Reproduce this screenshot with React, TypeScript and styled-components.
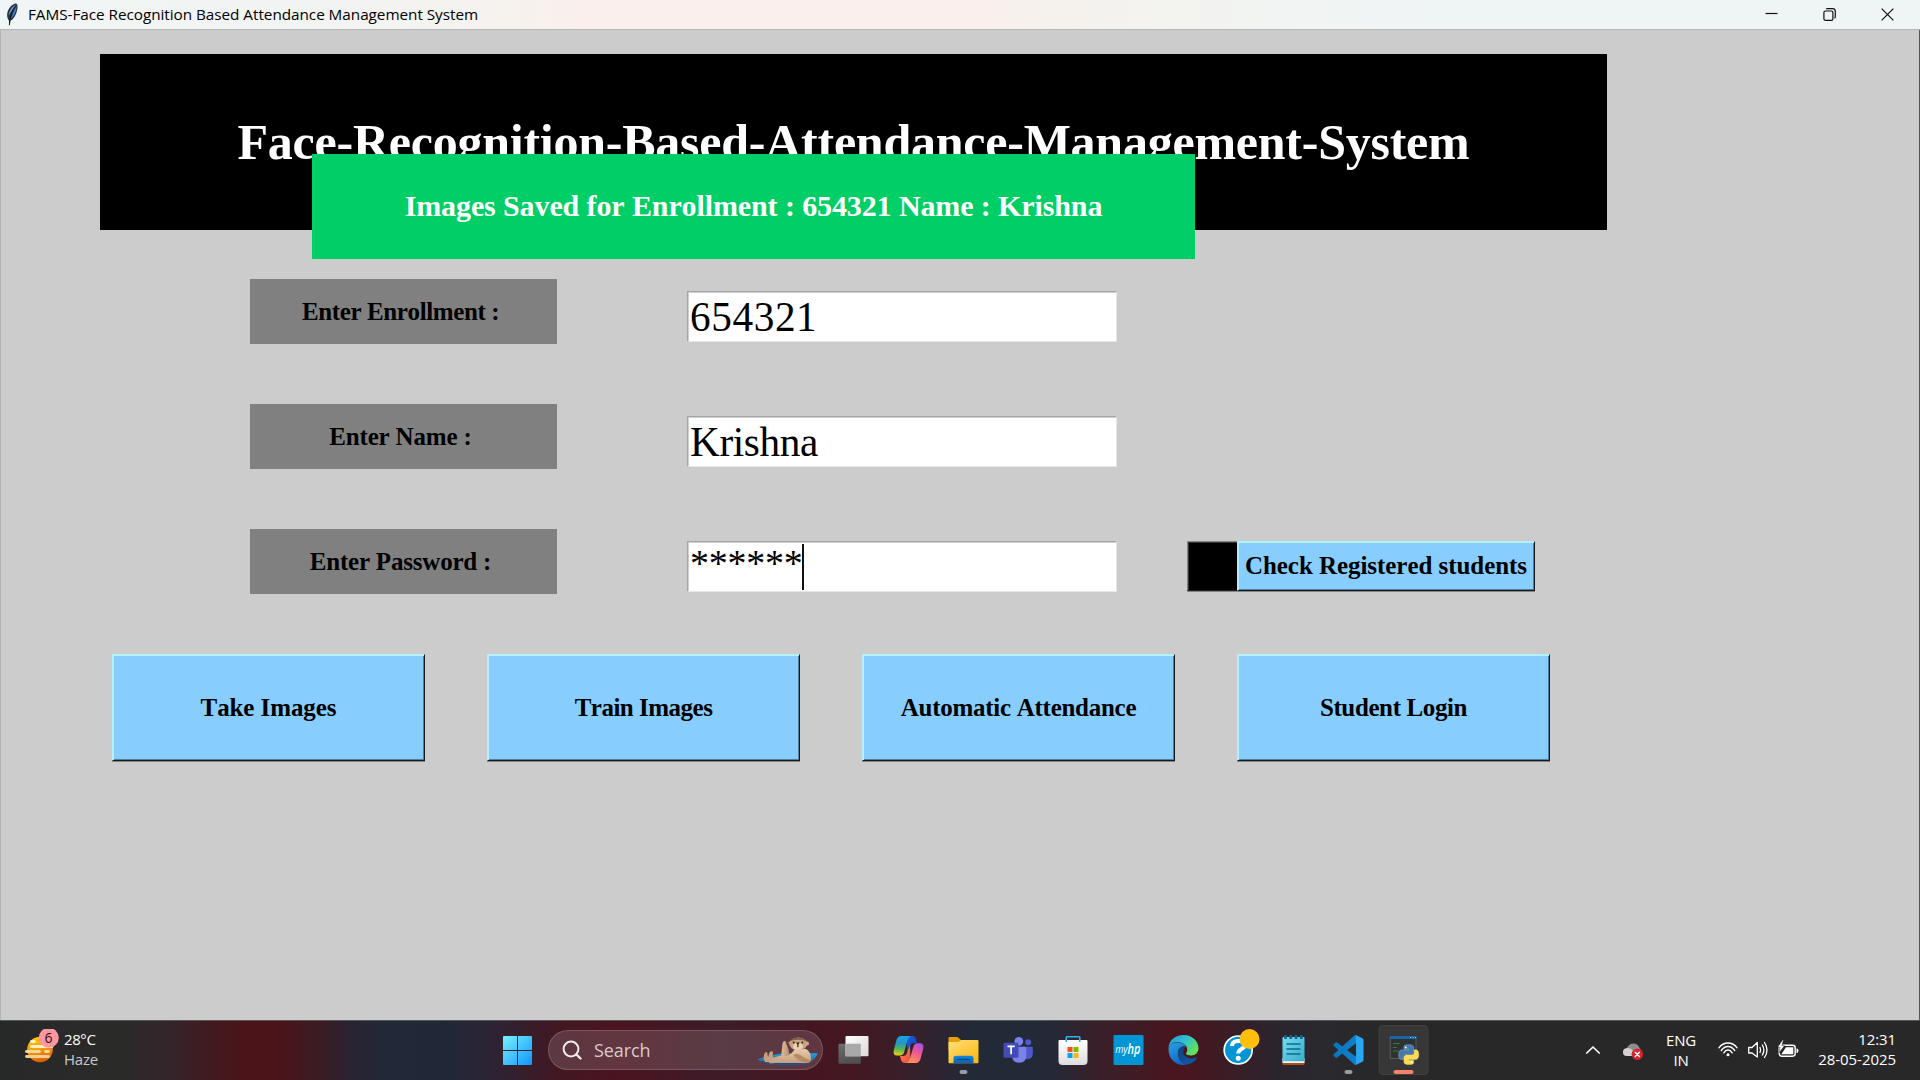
import React from "react";
import styled, { createGlobalStyle } from "styled-components";

const UI_FONT = '"Open Sans", "Noto Sans", sans-serif';
const SERIF = '"Liberation Serif", "Times New Roman", serif';

const GlobalStyle = createGlobalStyle`
  *, *::before, *::after { box-sizing: border-box; }
  html, body { margin: 0; padding: 0; overflow: hidden; }
  body { background: #cccccc; }
`;

const Desktop = styled.div`
  width: 1920px;
  height: 1080px;
  display: flex;
  flex-direction: column;
  overflow: hidden;
  font-family: ${UI_FONT};
`;

/* ---------- window chrome ---------- */

const TitleBar = styled.header`
  flex: none;
  height: 30px;
  display: flex;
  align-items: center;
  justify-content: space-between;
  padding-right: 3px;
  background: linear-gradient(90deg, #f0f5f5 0, #f2f4f3 330px, #f6f2ee 500px, #faefed 600px, #faefed 980px, #f6f1ed 1040px, #f3f3ef 1160px, #f1f4f3 1300px, #eff4f5 1440px);
  border-bottom: 1px solid #b2b6b5;
`;

const TitleLeft = styled.div`
  display: flex;
  align-items: center;
  padding-left: 5px;
  gap: 9px;
`;

const TitleText = styled.span`
  margin-top: -2px;
  font-size: 15.3px;
  line-height: 20px;
  letter-spacing: -0.04px;
  color: #000;
  white-space: nowrap;
`;

const WindowButtons = styled.div`
  display: flex;
`;

const WindowButton = styled.button`
  width: 58.3px;
  height: 29px;
  padding: 0;
  border: 0;
  background: none;
  display: flex;
  align-items: center;
  justify-content: center;
`;

/* ---------- application area ---------- */

const Client = styled.main`
  position: relative;
  flex: 1;
  background: #cccccc;
  border-left: 1px solid #b4b4b4;
  border-right: 1px solid #555;
  padding: 24px 0 0 99px;
`;

const Banner = styled.h1`
  margin: 0;
  width: 1507px;
  height: 176px;
  display: flex;
  align-items: center;
  justify-content: center;
  background: #000;
  color: #fff;
  font: bold 50px ${SERIF};
  letter-spacing: -0.24px;
  font-kerning: none;
  white-space: nowrap;
`;

const Notification = styled.div`
  position: absolute;
  left: 311px;
  top: 124px;
  width: 883px;
  height: 105px;
  display: flex;
  align-items: center;
  justify-content: center;
  padding-bottom: 1px;
  background: #00ce66;
  color: #fff;
  font: bold 30px ${SERIF};
  letter-spacing: -0.11px;
  font-kerning: none;
  white-space: nowrap;
`;

const Form = styled.section`
  display: flex;
  flex-direction: column;
  gap: 60px;
  margin: 49px 0 0 150px;
`;

const FormRow = styled.div`
  display: flex;
  align-items: flex-start;
  height: 65px;
`;

const FieldLabel = styled.label<{ $track: number }>`
  width: 307px;
  height: 65px;
  display: flex;
  align-items: center;
  justify-content: center;
  background: #808080;
  color: #000;
  font: bold 25px ${SERIF};
  letter-spacing: ${(p) => p.$track}px;
  font-kerning: none;
  white-space: pre;
`;

const Entry = styled.div<{ $track?: number }>`
  margin: 12px 0 0 130px;
  width: 430px;
  height: 51px;
  display: flex;
  align-items: center;
  padding-left: 2px;
  background: #fff;
  border: 1px solid;
  border-color: #a6a6a6 #e6e6e6 #e6e6e6 #a6a6a6;
  box-shadow: inset 1px 1px 0 #cfcfcf;
  color: #000;
  font: 41.25px ${SERIF};
  letter-spacing: ${(p) => p.$track ?? 0}px;
  font-kerning: none;
`;

const Mask = styled.span`
  padding-bottom: 7px;
  font-size: 38px;
  letter-spacing: -0.25px;
`;

const Caret = styled.i`
  width: 2.5px;
  height: 46px;
  margin-left: -1px;
  background: #111;
`;

const CheckGroup = styled.div`
  display: flex;
  margin: 12px 0 0 70px;
`;

const Bevel = styled.button<{ $track?: number }>`
  padding: 0;
  display: flex;
  align-items: center;
  justify-content: center;
  background: #87ceff;
  border: 1px solid;
  border-color: #b4eff6 #16191c #16191c #b4eff6;
  box-shadow: inset 1px 1px 0 #b4f0ff, inset -1px -1px 0 #4f7d9e, 0 1px 0 #858585;
  color: #000;
  font: bold 25px ${SERIF};
  letter-spacing: ${(p) => p.$track ?? 0}px;
  font-kerning: none;
  white-space: nowrap;
`;

const ClearButton = styled(Bevel)`
  width: 50px;
  height: 50px;
  background: #000;
  border-color: #858585 #000 #202020 #858585;
  border-right-width: 0;
  box-shadow: inset 1px 1px 0 #333, 0 1px 0 #858585;
`;

const CheckButton = styled(Bevel)`
  width: 298px;
  height: 50px;
`;

const Actions = styled.nav`
  display: flex;
  gap: 62px;
  margin: 60px 0 0 12px;
`;

const ActionButton = styled(Bevel)`
  width: 313px;
  height: 107px;
`;

/* ---------- taskbar ---------- */

const Taskbar = styled.footer`
  flex: none;
  height: 60px;
  display: flex;
  align-items: stretch;
  border-top: 1px solid #555859;
  background: linear-gradient(
    90deg,
    #272928 0, #2a2a29 120px, #33252a 170px, #401b20 205px, #4a1419 245px, #4a141a 280px, #3b1c23 320px,
    #2a2331 350px, #222837 385px, #222738 450px, #2b2434 490px, #431722 560px, #4a1420 620px, #3d1c28 720px,
    #451622 810px, #431821 850px, #3a1e28 900px, #2a2532 945px, #222937 975px, #232937 1050px, #38202a 1095px,
    #4a151d 1180px, #3c1c25 1225px, #2b242e 1275px, #2a292e 1320px, #282829 1380px, #282828 1920px
  );
  color: #fff;
  font-size: 15px;
  line-height: 20px;
`;

const Weather = styled.div`
  width: 490px;
  padding: 8px 0 0 22px;
  display: flex;
  gap: 2px;
`;

const WeatherText = styled.div`
  letter-spacing: -0.4px;
`;

const Muted = styled.div`
  color: #c9c9c9;
  letter-spacing: -0.2px;
`;

const AppCell = styled.div`
  width: 55px;
  height: 60px;
  margin-top: -1px;
  svg { display: block; }
`;

const SearchBox = styled.div`
  width: 275px;
  height: 40px;
  margin: 9px 3px 0 3px;
  padding: 0 4px 0 13px;
  display: flex;
  align-items: center;
  border: 1px solid rgba(255, 255, 255, 0.17);
  border-radius: 20px;
  background: rgba(255, 255, 255, 0.14);
`;

const SearchText = styled.span`
  flex: 1;
  margin-left: 12px;
  font-size: 18px;
  letter-spacing: -0.1px;
  color: #d6cbce;
`;

const Tray = styled.div`
  flex: 1;
  display: flex;
  justify-content: flex-end;
  padding-right: 24px;
`;

const TrayIcon = styled.div<{ $w: number; $gap: number }>`
  width: ${(p) => p.$w}px;
  margin-right: ${(p) => p.$gap}px;
  margin-top: -1px;
  svg { display: block; }
`;

const Language = styled.div`
  width: 40px;
  margin-right: 17px;
  padding-top: 8.5px;
  text-align: center;
  letter-spacing: -0.2px;
`;

const Clock = styled.div`
  width: 88px;
  padding-top: 7.5px;
  display: flex;
  flex-direction: column;
  align-items: flex-end;
  white-space: nowrap;
`;

const ClockLine = styled.span<{ $track: number }>`
  letter-spacing: ${(p) => p.$track}px;
`;

/* ---------- icons ---------- */

const FeatherIcon = () => (
  <svg width="14" height="24" viewBox="0 0 14 24">
    <path d="M11 0.5C13 1 13 5 11.5 9.5C10 14 7.500 17 5.500 17.500L4.500 23L3.800 17.500C1.500 14 1.500 9 4.500 5C6.500 2 9 0.500 11 0.500Z" fill="#243447" />
    <path d="M10.500 2C7.500 3 4 8 3.600 12.500L8 6Z" fill="#6fa3d8" />
    <path d="M11.500 3C11.500 8 9 13 6 15.500L9 8Z" fill="#4e84c4" />
    <path d="M10 3.500C7 8 5 13 4.400 22" stroke="#0e151d" strokeWidth="1" fill="none" />
  </svg>
);

const MinimizeIcon = () => (
  <svg width="13" height="13" viewBox="0 0 13 13"><path d="M0.500 5.500H12.500" stroke="#111" strokeWidth="1.200" /></svg>
);
const RestoreIcon = () => (
  <svg width="13" height="13" viewBox="0 0 13 13" fill="none" stroke="#111" strokeWidth="1.200">
    <rect x="0.900" y="3" width="9" height="9.300" rx="1.600" />
    <path d="M3.300 1.200Q3.500 0.700 4.500 0.700H9.500Q12.300 0.700 12.300 3.500V8.800Q12.300 9.800 11.500 10.200" />
  </svg>
);
const CloseIcon = () => (
  <svg width="13" height="13" viewBox="0 0 13 13"><path d="M0.600 0.600L12.400 12.400M12.400 0.600L0.600 12.400" stroke="#111" strokeWidth="1.200" /></svg>
);

const HazeIcon = () => (
  <svg width="40" height="40" viewBox="0 0 40 40">
    <defs>
      <linearGradient id="sun" x1="0" y1="0" x2="0.300" y2="1">
        <stop offset="0" stopColor="#ffcf0a" /><stop offset="0.550" stopColor="#f99d12" /><stop offset="1" stopColor="#e2620c" />
      </linearGradient>
    </defs>
    <circle cx="18" cy="20.500" r="12.800" fill="url(#sun)" />
    <g stroke="#fff0bd" strokeWidth="2.800" strokeLinecap="round">
      <path d="M9.500 12.500H12.500" /><path d="M9.500 17.500H30" />
      <path d="M4.500 22.500H17.500" stroke="#f2d999" /><path d="M23.500 22.500H26.500" stroke="#f2d999" />
      <path d="M4.500 27.500H26.500" stroke="#ecd08d" />
    </g>
    <circle cx="26.800" cy="8.800" r="10" fill="#ff97a2" />
    <text x="26.500" y="13.800" textAnchor="middle" fontSize="14" fontFamily="Open Sans" fill="#2a1114">6</text>
  </svg>
);

const StartIcon = () => (
  <svg width="55" height="60" viewBox="0 0 55 60">
    <defs>
      <linearGradient id="win" x1="0" y1="0" x2="1" y2="1" gradientUnits="objectBoundingBox">
        <stop offset="0" stopColor="#78f1ff" /><stop offset="1" stopColor="#0f95fb" />
      </linearGradient>
    </defs>
    <path fill="url(#win)" d="M14 16H27V30H13V17Q13 16 14 16ZM28 16H41Q42 16 42 17V30H28ZM13 31H27V45H14Q13 45 13 44ZM28 31H42V44Q42 45 41 45H28Z" />
  </svg>
);

const SearchIcon = () => (
  <svg width="20" height="20" viewBox="0 0 20 20" fill="none" stroke="#f1ebed" strokeWidth="2" strokeLinecap="round">
    <circle cx="9" cy="9" r="7.400" /><path d="M14.500 14.500L18.500 18.500" strokeWidth="2.400" />
  </svg>
);

const OtterIcon = () => (
  <svg width="62" height="34" viewBox="0 0 62 34">
    <defs>
      <linearGradient id="raft" x1="0" y1="0" x2="0" y2="1"><stop offset="0" stopColor="#2aa0dc" /><stop offset="1" stopColor="#195a9f" /></linearGradient>
      <linearGradient id="fur" x1="0" y1="0" x2="0" y2="1"><stop offset="0" stopColor="#e8cbac" /><stop offset="1" stopColor="#c69c79" /></linearGradient>
      <linearGradient id="paw" x1="0" y1="0" x2="1" y2="0"><stop offset="0" stopColor="#e0bf9d" /><stop offset="1" stopColor="#b98e6d" /></linearGradient>
    </defs>
    <path d="M1.500 26.500C8 24 14 22 26 20.500C40 19.500 58 20 62 20.500C60 24 57 28.500 52 30C46 32 36 32 28 31.800C14 31.500 7 30 1.500 26.500Z" fill="url(#raft)" />
    <path d="M6 28C16 31 40 31.500 53 28.500" stroke="#174e8c" strokeWidth="1.300" fill="none" />
    <path d="M9 29C6.500 25.500 8 19 10.500 19C12 19.500 11 23 12.500 24C12.500 20 14.500 17.500 16.500 18.500C18 20 15.500 23 17.500 24.500L20 29.500Z" fill="#c9a07d" />
    <path d="M13 29C16 24 24 22 32 22C36 21 37 18 39 16H50C54 18 56 24 54.500 28C53.500 30.500 50 30 46 30H20C16 30 13 31 13 29Z" fill="url(#fur)" />
    <path d="M25.200 22.500C26 18 26 12 27 9C28.500 7 30 8 30.500 11C31.500 14 33.500 17 33 21C31 24 27 24 25.200 22.500Z" fill="url(#paw)" />
    <path d="M37.500 22C40 19.500 45 22 48 24.500C51 27 54 26 54.500 28C53 30.500 46 30 42 26.500C40 24.500 38 24 37.500 22Z" fill="#b68a67" />
    <circle cx="33.800" cy="9.800" r="1.600" fill="#a27a59" /><circle cx="51" cy="10.500" r="2" fill="#d8b190" />
    <ellipse cx="42.300" cy="11" rx="9" ry="6.500" fill="#c9a27e" />
    <path d="M34.300 8C37 3.500 47.500 3.500 50.300 8Q42.300 5.500 34.300 8Z" fill="#7e6049" />
    <ellipse cx="42" cy="13.500" rx="5" ry="3.800" fill="#ead1b5" />
    <circle cx="37.700" cy="9.500" r="1" fill="#332016" /><circle cx="46.300" cy="9.500" r="1" fill="#332016" />
    <path d="M40 9.500H43.700L42.500 11.800V14.300H41.300V11.800Z" fill="#40281d" />
  </svg>
);

const TaskViewIcon = () => (
  <svg width="55" height="60" viewBox="0 0 55 60">
    <defs>
      <linearGradient id="tv" x1="0" y1="0" x2="1" y2="1"><stop offset="0" stopColor="#fff" /><stop offset="1" stopColor="#d9d9d9" /></linearGradient>
      <linearGradient id="tg" x1="0" y1="0" x2="0.300" y2="1"><stop offset="0" stopColor="#6f6f6f" /><stop offset="1" stopColor="#505050" /></linearGradient>
    </defs>
    <rect x="12.500" y="23.700" width="22.300" height="20" rx="1" fill="url(#tg)" />
    <rect x="19.500" y="16" width="23" height="20.300" rx="1" fill="url(#tv)" />
    <path d="M19.500 23.700H34.800V36.300H19.500Z" fill="#a9a9a9" />
  </svg>
);

const CopilotIcon = () => (
  <svg width="55" height="60" viewBox="0 0 55 60">
    <defs>
      <linearGradient id="c1" x1="0.300" y1="0" x2="0.200" y2="1">
        <stop offset="0" stopColor="#16a5e8" /><stop offset="0.350" stopColor="#2396c4" /><stop offset="0.650" stopColor="#52b45a" /><stop offset="1" stopColor="#f1cf12" />
      </linearGradient>
      <linearGradient id="c2" x1="0.800" y1="0" x2="0.300" y2="1">
        <stop offset="0" stopColor="#a851e8" /><stop offset="0.450" stopColor="#ee5592" /><stop offset="1" stopColor="#ff9658" />
      </linearGradient>
      <linearGradient id="c3" x1="0" y1="0" x2="1" y2="1"><stop offset="0" stopColor="#1b62dd" /><stop offset="1" stopColor="#153bb5" /></linearGradient>
      <linearGradient id="c4" x1="0" y1="0" x2="1" y2="1"><stop offset="0" stopColor="#ff8b3f" /><stop offset="1" stopColor="#f04a4d" /></linearGradient>
    </defs>
    <path d="M25.500 16H31.500Q34 16 35 19L36 23H33Q30 23 29 26L26.500 34Z" fill="url(#c3)" />
    <path d="M29.500 43H24Q21 43 20 40L19 36H22Q25 36 26 33L29 25Z" fill="url(#c4)" />
    <path d="M20 16H29.500Q27.500 17 26.500 20.500L23 32.500Q22 35.500 19 35.500H16Q11.500 35.500 12.800 30L15.500 20Q16.800 16 20 16Z" fill="url(#c1)" />
    <path d="M35 43H26Q28 42 29 38.500L32.500 26.500Q33.500 23.300 36.500 23.300H39Q43.500 23.300 42.200 29L39.500 39Q38.200 43 35 43Z" fill="url(#c2)" />
  </svg>
);

const FolderIcon = () => (
  <svg width="55" height="60" viewBox="0 0 55 60">
    <defs>
      <linearGradient id="fo" x1="0" y1="0" x2="0.800" y2="1"><stop offset="0" stopColor="#ffe07a" /><stop offset="1" stopColor="#fbb912" /></linearGradient>
      <linearGradient id="fb" x1="0" y1="0" x2="0" y2="1"><stop offset="0" stopColor="#1689dc" /><stop offset="1" stopColor="#0a62b5" /></linearGradient>
    </defs>
    <path d="M12.500 18Q12.500 17 13.500 17H21.500L25 20H41V30H12.500Z" fill="#e3a008" />
    <path d="M12.500 22H22L25.500 20H41.500Q42.500 20 42.500 21V42.300Q42.500 43.300 41.500 43.300H13.500Q12.500 43.300 12.500 42.300Z" fill="url(#fo)" />
    <path d="M17.500 43.300V38Q17.500 35.700 20 35.700H35Q37.500 35.700 37.500 38V43.300Z" fill="url(#fb)" />
    <rect x="21" y="38.800" width="13" height="1.300" fill="#07498c" />
    <rect x="23.500" y="50" width="8" height="4" rx="2" fill="#9b9ca3" />
  </svg>
);

const TeamsIcon = () => (
  <svg width="55" height="60" viewBox="0 0 55 60">
    <circle cx="37.200" cy="22.300" r="3" fill="#5059c9" />
    <path d="M31 26.700H41Q41.800 26.700 41.800 27.500V33.500Q41.800 39 36.500 39H33Z" fill="#5059c9" />
    <circle cx="27.800" cy="21.300" r="4.400" fill="#7b83eb" />
    <path d="M21.200 26.700H34Q35.200 26.700 35.200 28V36Q35.200 42.800 28.200 42.800Q21.200 42.800 21.200 36Z" fill="#7b83eb" />
    <rect x="12.500" y="22.700" width="15" height="15" rx="1.300" fill="#454bb5" />
    <path d="M16.500 26.300H23.700M20.100 26.300V34.300" stroke="#fff" strokeWidth="1.700" />
  </svg>
);

const StoreIcon = () => (
  <svg width="55" height="60" viewBox="0 0 55 60">
    <defs><linearGradient id="st" x1="0" y1="0" x2="0" y2="1"><stop offset="0" stopColor="#fff" /><stop offset="1" stopColor="#dedede" /></linearGradient></defs>
    <path d="M12.500 21Q12.500 20 13.500 20H40.500Q41.500 20 41.500 21V41Q41.500 45 37.500 45H16.500Q12.500 45 12.500 41Z" fill="url(#st)" />
    <path d="M20.200 22V17.500Q20.200 16.700 21 16.700H33Q33.800 16.700 33.800 17.500V22" fill="none" stroke="#29b4ee" strokeWidth="1.600" />
    <rect x="21.500" y="27" width="5" height="5" fill="#f25022" /><rect x="27.500" y="27" width="5" height="5" fill="#7fba00" />
    <rect x="21.500" y="33" width="5" height="5" fill="#00a4ef" /><rect x="27.500" y="33" width="5" height="5" fill="#ffb900" />
  </svg>
);

const MyHpIcon = () => (
  <svg width="55" height="60" viewBox="0 0 55 60">
    <rect x="12.500" y="15" width="30" height="30" rx="1" fill="#0096d6" />
    <text x="14.200" y="33" fontSize="10" fontStyle="italic" fontFamily="Open Sans" fill="#fff" textLength="12.500" lengthAdjust="spacingAndGlyphs">my</text>
    <text x="26.500" y="33.500" fontSize="15" fontStyle="italic" fontWeight="600" fontFamily="Open Sans" fill="#fff" textLength="13" lengthAdjust="spacingAndGlyphs">hp</text>
  </svg>
);

const EdgeIcon = () => (
  <svg width="55" height="60" viewBox="0 0 55 60">
    <defs>
      <linearGradient id="e1" x1="0" y1="0" x2="1" y2="0.600"><stop offset="0" stopColor="#2295d8" /><stop offset="0.500" stopColor="#2dc0d4" /><stop offset="1" stopColor="#63e355" /></linearGradient>
      <linearGradient id="e2" x1="0" y1="0" x2="0.600" y2="1"><stop offset="0" stopColor="#2aa4e6" /><stop offset="1" stopColor="#0c64bf" /></linearGradient>
      <linearGradient id="e3" x1="0" y1="0" x2="1" y2="1"><stop offset="0" stopColor="#12407f" /><stop offset="1" stopColor="#0d5cad" /></linearGradient>
    </defs>
    <path d="M12.500 29C12.500 20 19.500 15 27.500 15C36.500 15 42.500 21.500 42.500 28C42.500 32.500 39.500 35.500 35 35.500C31.500 35.500 30 34.500 30 33.600C30 32.800 31.300 32 31.300 29.500C31.300 26 27.500 22 21.500 22C16.500 22 13 25.500 12.500 29Z" fill="url(#e1)" />
    <path d="M12.500 29.500C13 25 17 22.500 21.500 22.500C26 22.500 29.500 24.500 30.700 27C28 25 22.500 27.500 22 32.500C21.500 38.500 26 44 31 44.500C21 47 12.500 39.500 12.500 29.500Z" fill="url(#e2)" />
    <path d="M22 31C21 38 26 44.500 31.500 44.500C36 43.500 39 41 40.800 38.200C41.200 37.500 40.700 37.200 40 37.500C36 39.500 31 38.500 28 35C26.500 33 27 29.500 29 27.500C25.500 26 22.500 28 22 31Z" fill="url(#e3)" />
  </svg>
);

const HelpIcon = () => (
  <svg width="55" height="60" viewBox="0 0 55 60">
    <circle cx="27.200" cy="30" r="14" fill="#0096d6" stroke="#fff" strokeWidth="1.700" />
    <path d="M21 26Q21 21.500 26.500 21Q33 20.500 33.500 25C33.700 29.500 27.200 28.500 27.200 33.500" fill="none" stroke="#fff" strokeWidth="4" />
    <circle cx="27.200" cy="38.200" r="2.500" fill="#fff" />
    <circle cx="38.500" cy="19" r="10" fill="#ffbf0b" />
  </svg>
);

const NotepadIcon = () => (
  <svg width="55" height="60" viewBox="0 0 55 60">
    <defs><linearGradient id="np" x1="0" y1="0" x2="1" y2="1"><stop offset="0" stopColor="#7bdcf2" /><stop offset="1" stopColor="#35acc9" /></linearGradient></defs>
    <path d="M16.500 40H38.500V44Q38.500 45 37.500 45H17.500Q16.500 45 16.500 44Z" fill="#a5501c" />
    <path d="M16.500 38H38.500V43H16.500Z" fill="#f5f2ed" />
    <path d="M16.500 18Q16.500 17 17.500 17H37.500Q38.500 17 38.500 18V41.300H16.500Z" fill="url(#np)" />
    <path d="M20.500 24H34.500M20.500 29H34.500M20.500 34H34.500" stroke="#0b6c8c" strokeWidth="1.700" />
    <path d="M19.500 15V19M24.800 15V19M30 15V19M35.300 15V19" stroke="#0f6687" strokeWidth="2.600" />
  </svg>
);

const VsCodeIcon = () => (
  <svg width="55" height="60" viewBox="0 0 55 60">
    <defs><linearGradient id="vs" x1="0" y1="0" x2="1" y2="0"><stop offset="0" stopColor="#0d74bd" /><stop offset="0.730" stopColor="#0f80cb" /><stop offset="0.760" stopColor="#2aa3f0" /><stop offset="1" stopColor="#2aa8f6" /></linearGradient></defs>
    <path transform="translate(12.500 15) scale(1.250)" fill="url(#vs)" d="M23.150 2.587L18.210.21a1.494 1.494 0 0 0-1.705.29l-9.460 8.630-4.120-3.128a.999.999 0 0 0-1.276.057L.327 7.261A1 1 0 0 0 .326 8.740L3.899 12 .326 15.260a1 1 0 0 0 .001 1.479L1.650 17.940a.999.999 0 0 0 1.276.057l4.120-3.128 9.460 8.630a1.492 1.492 0 0 0 1.704.290l4.942-2.377A1.500 1.500 0 0 0 24 20.060V3.939a1.500 1.500 0 0 0-.850-1.352zm-5.146 14.861L10.826 12l7.178-5.448v10.896z" />
    <rect x="23.500" y="50" width="8" height="4" rx="2" fill="#9c9c9c" />
  </svg>
);

const SNAKE =
  "M14.250.180l.900.200.730.260.590.300.450.320.340.340.250.340.160.330.100.300.040.260.020.200-.010.130V8.500l-.050.630-.130.550-.210.460-.260.380-.300.310-.330.250-.350.190-.350.140-.330.100-.300.070-.260.040-.210.020H8.770l-.690.050-.590.140-.500.220-.410.270-.330.320-.270.350-.200.360-.150.370-.100.350-.070.320-.040.270-.020.210v3.060H3.170l-.210-.030-.280-.070-.320-.120-.350-.180-.360-.260-.360-.360-.350-.460-.320-.590-.280-.730-.210-.880-.140-1.050-.050-1.230.060-1.220.160-1.040.240-.870.320-.710.360-.570.400-.440.420-.330.420-.240.400-.160.360-.100.320-.050.240-.010h.160l.060.010h8.160v-.830H6.180l-.010-2.750-.020-.370.050-.340.110-.310.170-.280.250-.260.310-.230.380-.200.440-.180.510-.150.580-.120.640-.100.710-.060.770-.040.840-.020 1.270.050z";

const PythonIcon = () => (
  <svg width="55" height="60" viewBox="0 0 55 60">
    <rect x="3" y="5.500" width="49" height="49" rx="4" fill="#373737" stroke="#414141" />
    <rect x="14.300" y="17" width="25.700" height="21.500" fill="#303132" stroke="#565a5c" />
    <rect x="13.800" y="16" width="26.700" height="3" fill="#1b65a6" />
    <path d="M34 17.500H35M36.500 17.500H37.500M39 17.500H40" stroke="#9ec6e8" />
    <path d="M17 23.500H23.500M17 27.500H21M17 31H23" stroke="#2f7e35" strokeWidth="1.200" />
    <g transform="translate(22.800 24.700) scale(0.830)">
      <path d={SNAKE} fill="#3f7bb0" stroke="#dfe9f2" strokeWidth="0.400" />
      <circle cx="8.500" cy="3.300" r="1.100" fill="#fff" />
      <g transform="rotate(180 12 12)">
        <path d={SNAKE} fill="#ffdc4f" stroke="#fff3c0" strokeWidth="0.400" />
        <circle cx="8.500" cy="3.300" r="1.100" fill="#fff" />
      </g>
    </g>
    <rect x="17.500" y="50" width="20" height="4" rx="2" fill="#f5836a" />
  </svg>
);

const ChevronIcon = () => (
  <svg width="16" height="60" viewBox="0 0 16 60"><path d="M1.800 33L8 27L14.200 33" fill="none" stroke="#fff" strokeWidth="1.700" strokeLinecap="round" strokeLinejoin="round" /></svg>
);
const CloudIcon = () => (
  <svg width="22" height="60" viewBox="0 0 22 60">
    <path d="M5 36Q1 36 1 32Q1 28.500 5 28Q7 23.500 11.500 23.500Q16 23.500 17.500 28Q20 30 19 34L16 36Z" fill="#8d8d8d" />
    <path d="M5 36Q1 36 1 32Q1 28.500 5.500 28Q9 28 14 33L12 36Z" fill="#d2d2d2" />
    <circle cx="15.300" cy="34.300" r="5.700" fill="#d9232e" />
    <path d="M13.200 32.200L17.400 36.400M17.400 32.200L13.200 36.400" stroke="#fff" strokeWidth="1.400" strokeLinecap="round" />
  </svg>
);
const WifiIcon = () => (
  <svg width="20" height="60" viewBox="0 0 20 60" fill="none" stroke="#fff" strokeWidth="1.400" strokeLinecap="round">
    <path d="M0.900 27.800Q4.500 23 10 23Q15.500 23 19.100 27.800" /><path d="M3.300 30.500Q6 26.500 10 26.500Q14 26.500 16.700 30.500" />
    <path d="M5.800 32.800Q7.500 30 10 30Q12.500 30 14.200 32.800" /><circle cx="10" cy="34.800" r="1.500" fill="#fff" stroke="none" />
  </svg>
);
const SpeakerIcon = () => (
  <svg width="20" height="60" viewBox="0 0 20 60" fill="none" stroke="#fff" strokeWidth="1.300" strokeLinecap="round" strokeLinejoin="round">
    <path d="M0.700 27.500H4L9.300 22.500V37L4 33H0.700Z" /><path d="M12 27.500Q13.300 30 12 32.500" /><path d="M14.300 25Q17.500 30 14.300 35" /><path d="M16.500 22.500Q21.500 30 16.500 37.500" />
  </svg>
);
const BatteryIcon = () => (
  <svg width="21" height="60" viewBox="0 0 21 60">
    <rect x="1.200" y="25.200" width="16" height="11" rx="2.600" fill="none" stroke="#fff" strokeWidth="1.400" />
    <path d="M3.300 34.300L8 27.200H15.300V34.300Z" fill="#fff" />
    <path d="M18.500 28.500Q20.500 28.500 20.500 30.700Q20.500 33 18.500 33Z" fill="#fff" />
    <path d="M4.500 20L-0.500 27.500H2L1 33L6.500 25.500H3.800L5.500 20Z" fill="#fff" stroke="#282828" strokeWidth="0.500" />
  </svg>
);

const APPS = [TaskViewIcon, CopilotIcon, FolderIcon, TeamsIcon, StoreIcon, MyHpIcon, EdgeIcon, HelpIcon, NotepadIcon, VsCodeIcon, PythonIcon];

const ACTIONS = [
  { text: "Take Images", track: -0.08 },
  { text: "Train Images", track: -0.5 },
  { text: "Automatic Attendance", track: -0.27 },
  { text: "Student Login", track: -0.38 },
];

export default function App() {
  return (
    <Desktop>
      <GlobalStyle />
      <TitleBar>
        <TitleLeft>
          <FeatherIcon />
          <TitleText>FAMS-Face Recognition Based Attendance Management System</TitleText>
        </TitleLeft>
        <WindowButtons>
          <WindowButton><MinimizeIcon /></WindowButton>
          <WindowButton><RestoreIcon /></WindowButton>
          <WindowButton><CloseIcon /></WindowButton>
        </WindowButtons>
      </TitleBar>

      <Client>
        <Banner>Face-Recognition-Based-Attendance-Management-System</Banner>
        <Notification>Images Saved for Enrollment : 654321 Name : Krishna</Notification>

        <Form>
          <FormRow>
            <FieldLabel $track={-0.38}>{"Enter Enrollment : "}</FieldLabel>
            <Entry $track={0.6}>654321</Entry>
          </FormRow>
          <FormRow>
            <FieldLabel $track={-0.17}>{"Enter Name : "}</FieldLabel>
            <Entry $track={-0.4}>Krishna</Entry>
          </FormRow>
          <FormRow>
            <FieldLabel $track={-0.2}>{"Enter Password : "}</FieldLabel>
            <Entry>
              <Mask>******</Mask>
              <Caret />
            </Entry>
            <CheckGroup>
              <ClearButton aria-label="Clear" />
              <CheckButton $track={-0.05}>Check Registered students</CheckButton>
            </CheckGroup>
          </FormRow>
        </Form>

        <Actions>
          {ACTIONS.map((a) => (
            <ActionButton key={a.text} $track={a.track}>{a.text}</ActionButton>
          ))}
        </Actions>
      </Client>

      <Taskbar>
        <Weather>
          <HazeIcon />
          <WeatherText>
            <div>28°C</div>
            <Muted>Haze</Muted>
          </WeatherText>
        </Weather>
        <AppCell><StartIcon /></AppCell>
        <SearchBox>
          <SearchIcon />
          <SearchText>Search</SearchText>
          <OtterIcon />
        </SearchBox>
        {APPS.map((Icon, i) => (
          <AppCell key={i}><Icon /></AppCell>
        ))}
        <Tray>
          <TrayIcon $w={16} $gap={21}><ChevronIcon /></TrayIcon>
          <TrayIcon $w={22} $gap={17}><CloudIcon /></TrayIcon>
          <Language>
            <div>ENG</div>
            <div>IN</div>
          </Language>
          <TrayIcon $w={20} $gap={10}><WifiIcon /></TrayIcon>
          <TrayIcon $w={20} $gap={10}><SpeakerIcon /></TrayIcon>
          <TrayIcon $w={21} $gap={9}><BatteryIcon /></TrayIcon>
          <Clock>
            <ClockLine $track={-0.1}>12:31</ClockLine>
            <ClockLine $track={-0.05}>28-05-2025</ClockLine>
          </Clock>
        </Tray>
      </Taskbar>
    </Desktop>
  );
}
